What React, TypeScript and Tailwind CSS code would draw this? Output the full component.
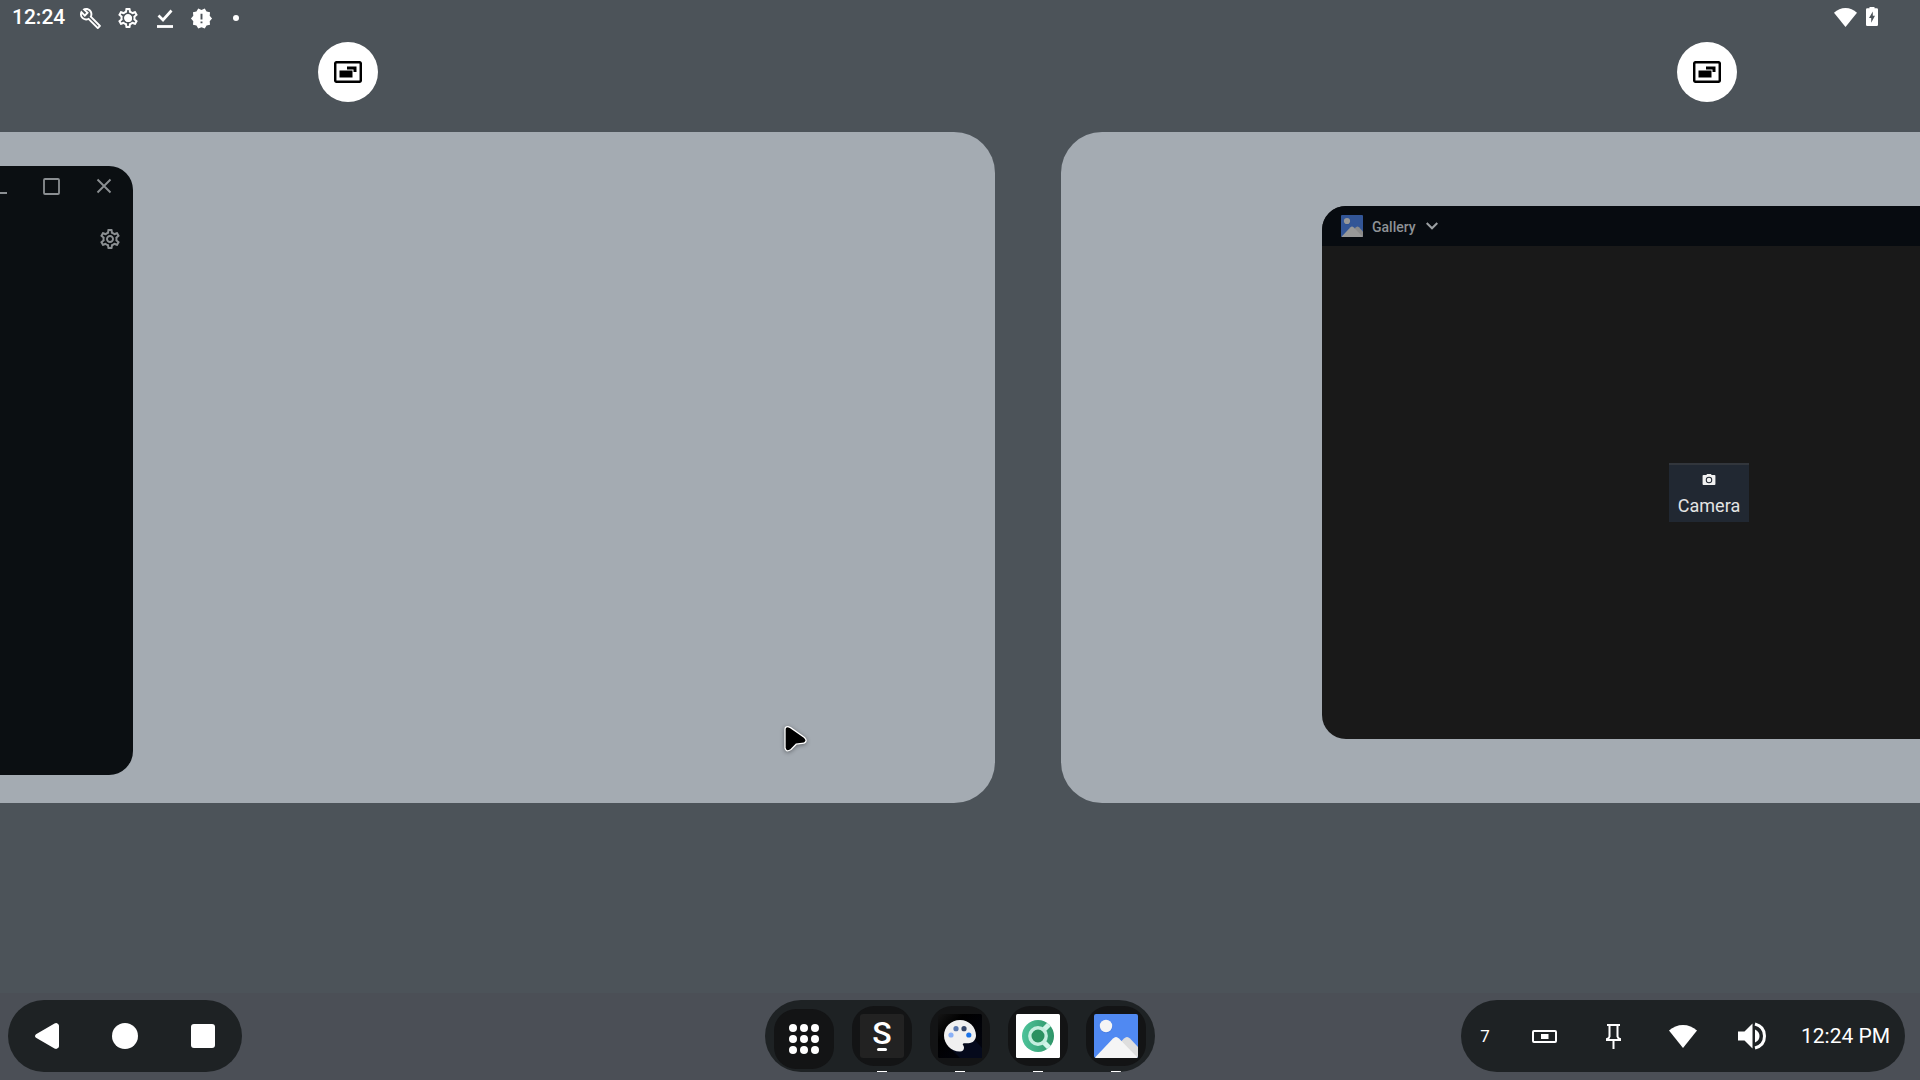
import type { ReactNode } from "react";
import { MdNewReleases, MdOutlineBuild, MdOutlineSettings } from "react-icons/md";

function WifiIcon({ className }: { className: string }) {
  return (
    <svg viewBox="0 0 28 23" className={className} fill="currentColor" preserveAspectRatio="none">
      <path d="M0 5.600C4 2 8.800 0 14 0s10 2 14 5.600L14 23z" />
    </svg>
  );
}

function GalleryIcon({ className }: { className: string }) {
  return (
    <svg viewBox="0 0 44 44" className={className}>
      <rect width="44" height="44" rx="2" fill="#5089f2" />
      <circle cx="12.300" cy="13" r="6.200" fill="#3f74d8" opacity="0.5" />
      <circle cx="12" cy="12" r="6.200" fill="#f5f5f5" />
      <path d="M22 44V33l8-8.500q3-3 6 0l8 8.500v9q0 2-2 2z" fill="#dedede" />
      <path d="M1 43.500L19 24.500q3-3 6 0L43.500 43.500 42 44H2z" fill="#f5f5f5" />
    </svg>
  );
}

function StatusBar() {
  return (
    <div className="flex h-[35px] shrink-0 items-start justify-between text-white">
      <div className="flex h-9 items-center pl-3">
        <span className="-mt-0.5 w-[67px] text-[21px] leading-[34px] font-medium">12:24</span>
        <MdOutlineBuild className="h-[23px] w-[23px]" />
        <div className="ml-3.5 grid place-items-center">
          <MdOutlineSettings className="h-6 w-6 [grid-area:1/1]" />
          <span className="h-[7px] w-[7px] rounded-full bg-white [grid-area:1/1]" />
        </div>
        <svg viewBox="0 0 16 19" className="ml-[17px] h-[19px] w-4" fill="none" stroke="currentColor">
          <path d="M1.500 6.500L6 11 14.500 1.500" strokeWidth="2.700" />
          <path d="M0 17.500h16" strokeWidth="2.800" />
        </svg>
        <MdNewReleases className="ml-[17px] h-[23px] w-[23px]" />
        <span className="ml-5 h-1.5 w-1.5 rounded-full bg-white" />
      </div>
      <div className="flex items-start gap-[9px] pt-[7px] pr-[42px]">
        <WifiIcon className="mt-px h-[19px] w-[23px]" />
        <svg viewBox="0 0 12 19" className="h-[19px] w-3">
          <path
            d="M1.300 1.300H3.500V0h5v1.300h2.200q1.300 0 1.300 1.300v15.100q0 1.300-1.300 1.300H1.300Q0 19 0 17.700V2.600q0-1.300 1.300-1.300z"
            fill="#fff"
          />
          <path d="M6.800 4.500v4.200H9L5.200 15.800v-4.700H3z" fill="#4c5359" />
        </svg>
      </div>
    </div>
  );
}

function Desktop({ children }: { children: ReactNode }) {
  return (
    <div className="flex w-[1293px] shrink-0 flex-col items-center">
      <button type="button" className="mr-px flex h-[60px] w-[60px] items-center justify-center rounded-full bg-white">
        <svg viewBox="0 0 28 22" className="h-[22px] w-7">
          <rect x="1.200" y="1.200" width="25.600" height="19.600" rx="1.500" fill="none" stroke="#000" strokeWidth="2.500" />
          <path d="M5.500 9.500h13v7h-13z" fill="#000" />
          <path d="M13 5.500h9.500V11h-3V8.500H13z" fill="#000" />
        </svg>
      </button>
      <div className="mt-[30px] h-[671px] w-full rounded-[41px] bg-[#a4abb2]">{children}</div>
    </div>
  );
}

function SettingsWindow() {
  return (
    <div className="mt-[34px] ml-[131px] flex h-[609px] w-[300px] flex-col items-end rounded-3xl bg-[#0b0f12] text-[#8b8f92]">
      <div className="flex h-10 items-center pr-[21px]">
        <svg viewBox="0 0 16 16" className="h-4 w-4" stroke="currentColor" strokeWidth="2">
          <path d="M0 15h16" />
        </svg>
        <svg viewBox="0 0 17 17" className="ml-9 h-[17px] w-[17px]" fill="none" stroke="currentColor" strokeWidth="1.800">
          <rect x="1" y="1" width="15" height="15" rx="1" />
        </svg>
        <svg viewBox="0 0 16 16" className="ml-9 h-4 w-4" stroke="currentColor" strokeWidth="1.900">
          <path d="M1.500 1.500l13 13M14.500 1.500l-13 13" />
        </svg>
      </div>
      <MdOutlineSettings className="mt-[21px] mr-[11px] h-6 w-6" />
    </div>
  );
}

function GalleryWindow() {
  return (
    <div className="mt-[74px] ml-[261px] flex h-[533px] w-[770px] flex-col overflow-hidden rounded-3xl bg-[#191919]">
      <div className="flex h-10 shrink-0 items-center bg-[#070b10] pl-[19px]">
        <GalleryIcon className="h-[22px] w-[22px] brightness-[0.62]" />
        <span className="ml-[9px] w-[43px] pt-0.5 text-[14px] font-medium text-[#8e9296]">Gallery</span>
        <svg viewBox="0 0 12 8" className="ml-[11px] h-2 w-3" fill="none" stroke="#9a9ea1" strokeWidth="2.100">
          <path d="M.7 1L6 6.300 11.300 1" />
        </svg>
      </div>
      <div className="flex grow justify-center pt-[217px] pl-1">
        <div className="flex h-[59px] w-20 flex-col items-center border-t-2 border-[#32363c] bg-[#212832] pt-[9px] text-[#e4e4e4]">
          <svg viewBox="0 0 14 12" className="h-[11px] w-3.5">
            <path d="M1 1h3L5 0h4l1 1h3q1 0 1 1v9q0 1-1 1H1q-1 0-1-1V2q0-1 1-1z" fill="#f1f1f1" />
            <circle cx="7" cy="6.500" r="3" fill="none" stroke="#212832" strokeWidth="1.100" />
          </svg>
          <span className="mt-2 text-[18px] leading-[25px]">Camera</span>
        </div>
      </div>
    </div>
  );
}

function DockApp({ children }: { children: ReactNode }) {
  return (
    <div className="flex h-[72px] w-[60px] flex-col items-center pt-1.5">
      <div className="flex h-[60px] w-[60px] shrink-0 items-center justify-center rounded-[22px] bg-[#131415]">
        {children}
      </div>
      <span className="mt-[5px] h-px w-2.5 shrink-0 bg-white" />
    </div>
  );
}

function Dock() {
  return (
    <div className="flex h-[72px] w-[390px] gap-[18px] overflow-hidden rounded-full bg-[#1e2224] px-[9px]">
      <div className="mt-[9px] flex h-[60px] w-[60px] items-center justify-center rounded-[22px] bg-[#131415]">
        <div className="grid grid-cols-3 gap-[3px]">
          {Array.from({ length: 9 }, (_, i) => (
            <span key={i} className="h-2 w-2 rounded-full bg-white" />
          ))}
        </div>
      </div>
      <DockApp>
        <div className="flex h-11 w-11 flex-col items-center rounded-[3px] bg-[#222] pt-[5px] text-white">
          <span className="text-[32px] leading-[29px] font-medium">S</span>
          <span className="h-[3px] w-2.5 rounded-full bg-white" />
        </div>
      </DockApp>
      <DockApp>
        <svg viewBox="0 0 44 44" className="h-11 w-11">
          <defs>
            <linearGradient id="night" x1="0" y1="0" x2="1" y2="1">
              <stop offset="0" stopColor="#151515" />
              <stop offset="0.3" stopColor="#000" />
              <stop offset="1" stopColor="#020410" />
            </linearGradient>
          </defs>
          <rect width="44" height="44" rx="1.500" fill="url(#night)" />
          <path d="M11 33L25 26 37 26 44 34V44H22z" fill="#050a1c" />
          <path
            d="M22 6C13 6 6 13 6 21.500S13 37.500 22 37.500c2.500 0 4-1.600 4-3.800 0-1.100-.5-1.900-1-2.600-.6-.8 0-1.900 1-1.900h4.500c4.200 0 7.500-3.400 7.500-7.700C38 13 31 6 22 6z"
            fill="#f0f0f0"
          />
          <circle cx="13" cy="21" r="2.600" fill="#8ab1f7" />
          <circle cx="18" cy="14.700" r="2.600" fill="#5877ad" />
          <circle cx="26" cy="14.700" r="2.600" fill="#344668" />
          <circle cx="30.800" cy="21" r="2.600" fill="#1a73e8" />
        </svg>
      </DockApp>
      <DockApp>
        <svg viewBox="0 0 44 44" className="h-11 w-11">
          <defs>
            <linearGradient id="ring">
              <stop offset="0" stopColor="#4dc39a" />
              <stop offset="1" stopColor="#2f9568" />
            </linearGradient>
            <clipPath id="disc">
              <circle cx="22" cy="22" r="16" />
            </clipPath>
          </defs>
          <rect width="44" height="44" rx="1.500" fill="#fff" />
          <g clipPath="url(#disc)">
            <rect x="6" y="6" width="32" height="32" fill="url(#ring)" />
            <path d="M27 16.500L36 7.500M27 27.500l9 9" stroke="#d3f5e9" strokeWidth="5" />
            <circle cx="22" cy="22" r="8.200" fill="#2b9160" stroke="#c5eedf" strokeWidth="3.400" />
          </g>
        </svg>
      </DockApp>
      <DockApp>
        <GalleryIcon className="h-11 w-11" />
      </DockApp>
    </div>
  );
}

function NavButtons() {
  return (
    <div className="flex h-[72px] w-[234px] items-center rounded-full bg-[#1e2224] pl-[27px]">
      <svg viewBox="0 0 24 26" className="h-[26px] w-6" fill="#fff">
        <path d="M1 11.200L19.500.5Q21.500-.5 23 .9q1 .6 1 2v20.200q0 1.500-1 2-1.500 1.400-3.500.4L1 14.800q-2-1.800 0-3.600z" />
      </svg>
      <span className="ml-[53px] h-[26px] w-[26px] rounded-full bg-white" />
      <span className="ml-[53px] h-6 w-6 rounded-[3px] bg-white" />
    </div>
  );
}

function SystemTray() {
  return (
    <div className="flex h-[72px] w-[444px] items-center rounded-full bg-[#1e2224] text-white">
      <span className="w-12 pt-0.5 text-center text-[17px]">7</span>
      <svg viewBox="0 0 25 13" className="ml-[23px] h-[13px] w-[25px]">
        <rect x="1" y="1" width="23" height="11" rx="1" fill="none" stroke="#fff" strokeWidth="2" />
        <path d="M9 4h7.500v5H9z" fill="#fff" />
      </svg>
      <svg viewBox="0 0 15 25" className="ml-[49px] h-[25px] w-[15px]" fill="none" stroke="#fff" strokeWidth="2">
        <path d="M1 1h13M3.500 1v11.500Q3 14.500 1 15v1h13v-1q-2-.5-2.500-2.500V1M7.500 16v9" />
      </svg>
      <WifiIcon className="ml-12 h-[23px] w-7" />
      <svg viewBox="0 0 29 28" className="ml-[41px] h-7 w-[29px]" fill="#fff">
        <path d="M0 9.500h6.500L14.500 1.500v25l-8-8H0z" />
        <path d="M17 7.500q4.500 2 4.500 6.500T17 20.500z" />
        <path d="M17 2q9.500 2.500 9.500 12T17 26" fill="none" stroke="#fff" strokeWidth="3" />
      </svg>
      <span className="ml-[34px] pt-0.5 text-[21px] whitespace-nowrap">12:24 PM</span>
    </div>
  );
}

export default function App() {
  return (
    <div className="relative flex h-[1080px] w-[1920px] flex-col overflow-hidden bg-[#4c5359] font-['Roboto',sans-serif]">
      <StatusBar />
      <div className="-ml-[298px] flex grow gap-[66px] pt-[7px]">
        <Desktop>
          <SettingsWindow />
        </Desktop>
        <Desktop>
          <GalleryWindow />
        </Desktop>
      </div>
      <div className="grid h-[87px] shrink-0 grid-cols-[757px_696px_444px] items-start bg-[#4b4f56] pt-[7px] pl-2">
        <NavButtons />
        <Dock />
        <SystemTray />
      </div>

      {/* mouse pointer */}
      <svg
        viewBox="0 0 24 28"
        className="absolute top-[725px] left-[783px] h-7 w-6 drop-shadow-[0_1px_2px_rgba(0,0,0,0.4)]"
      >
        <path
          d="M2 4.500Q2 1.500 5 1.700L7.500 2.600 21.500 12.500Q25 16 21 18.200L13.200 19.200 8 24.500Q3 27.800 2 23z"
          fill="#000"
          stroke="#fff"
          strokeWidth="1.300"
        />
      </svg>
    </div>
  );
}
